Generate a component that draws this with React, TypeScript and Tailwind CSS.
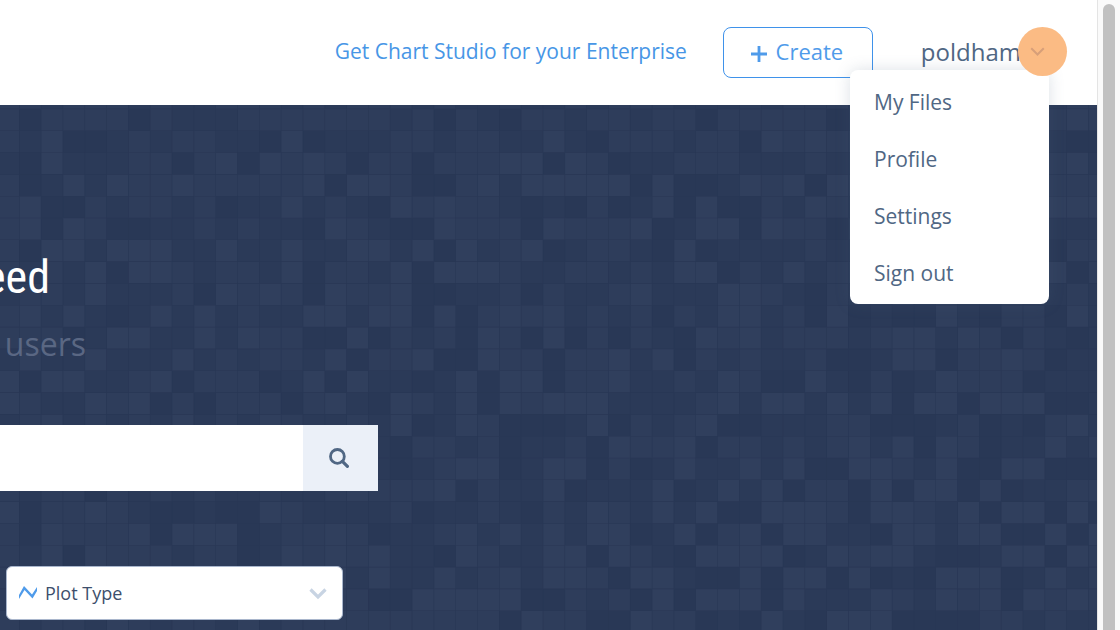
import React, { useState } from "react";

const CELL = 21.82;
const ORIGIN_X = 19.6 - CELL;
const ORIGIN_Y = 4.2 - CELL;

// One digit per tile, 0 = darkest, 3 = lightest.
// Each row is given in three runs of seventeen tiles.
const TILES = [
  ["22122212112221212", "22121121121222111", "21222121111222122"],
  ["20222202111222222", "21202102212212202", "22220111111111232"],
  ["21300121221103011", "12212211310222122", "03232211111111100"],
  ["10311122023032320", "22022233032011222", "11121121111121231"],
  ["20131322322222303", "32002313333303001", "32303212121112222"],
  ["23002122120113121", "03232210102013030", "02132112112111333"],
  ["23032001121211032", "10032220322230133", "03220212112121111"],
  ["20331333113113113", "31303123012210301", "11121121121121022"],
  ["21213033212213022", "13033321122121330", "21312212112112302"],
  ["12213111203232032", "23001120211231113", "32102112121121121"],
  ["23131013131211331", "33030232312120213", "31203010031022031"],
  ["22201331131322003", "02120320302021032", "31222123313202101"],
  ["13113111312122130", "22300322022313021", "21120013302232011"],
  ["30331123022201303", "11013033022311213", "20031020132220111"],
  ["32113230202220231", "03213032333111123", "13313130330333001"],
  ["12312121312132112", "13013200013021230", "01112200012010231"],
  ["21321203122130212", "10221201120322302", "21212313032011312"],
  ["12302132120312132", "10123301330201311", "31300332130033000"],
  ["21220212121121123", "22230211301113013", "13022030330301122"],
  ["30223210010032111", "12011210213213130", "03332033213033030"],
  ["20322230333012232", "01123131313301302", "30331103313300303"],
  ["21303222122013232", "31103211330321033", "33013233100133032"],
  ["21213213213122131", "31131231332033100", "30330301033301312"],
  ["22131221312123122", "00333330021203033", "30311132132303232"],
  ["21221321221312222", "22222203220032201", "03103330000221211"],
].map((runs) => runs.join(""));

const FILLS = ["#293856", "#2b3a58", "#2e3d5b", "#303f5d"];

function tilePath(level: number): string {
  let d = "";
  TILES.forEach((row, r) => {
    for (let c = 0; c < row.length; c++) {
      if (Number(row[c]) === level) {
        const x = (ORIGIN_X + c * CELL).toFixed(1);
        const y = (ORIGIN_Y + r * CELL).toFixed(1);
        d += `M${x} ${y}h21.2v21.2h-21.2z`;
      }
    }
  });
  return d;
}

function Mosaic() {
  return (
    <svg className="absolute inset-0 h-full w-full" aria-hidden="true" viewBox="0 0 1097 525" preserveAspectRatio="xMinYMin slice">
      {FILLS.map((fill, level) => (
        <path key={fill} d={tilePath(level)} fill={fill} />
      ))}
    </svg>
  );
}

function Chevron({ className, width }: { className: string; width: number }) {
  return (
    <svg className={className} viewBox="0 0 18 12" fill="none" stroke="currentColor" strokeWidth={width} aria-hidden="true">
      <path d="M1.500 1.500l7.500 7.500 7.500-7.500" />
    </svg>
  );
}

const MENU = ["My Files", "Profile", "Settings", "Sign out"];

function AccountMenu() {
  const [open, setOpen] = useState(true);
  return (
    <div className="ml-12 pb-0.5">
      <button
        type="button"
        aria-expanded={open}
        onClick={() => setOpen(!open)}
        className="relative flex cursor-pointer items-center gap-[9px] text-2xl leading-8 text-[#506784]"
      >
        poldham
        <span className="absolute -right-[22px] -top-[9px] z-20 size-[49px] rounded-full bg-[#fbbb84]" />
        <Chevron className="relative z-30 h-[10px] w-[15px] text-[#d79f79]" width={2.4} />
      </button>
      {open && (
        <ul className="absolute right-12 top-[70px] z-10 w-[199px] rounded-lg bg-white pb-[2px] pt-1 shadow-[0_0_16px_rgba(80,103,132,0.2)]">
          {MENU.map((item) => (
            <li key={item}>
              <a href="#" className="block px-6 text-[21px] leading-[57px] text-[#506784]">
                {item}
              </a>
            </li>
          ))}
        </ul>
      )}
    </div>
  );
}

function Header() {
  return (
    <header className="relative z-10 flex h-[105px] items-center justify-end bg-white pr-[52px]">
      <a href="#" className="mr-9 pb-1 text-[21px] leading-8 text-[#4796e6]">
        Get Chart Studio for your Enterprise
      </a>
      <button
        type="button"
        className="flex h-[51px] w-[150px] items-center justify-center gap-[9px] rounded-lg border border-[#3f92ea] pb-0.5 pr-0.5 text-[22px] text-[#4f9bea]"
      >
        <svg className="mt-1 size-4" viewBox="0 0 16 16" stroke="currentColor" strokeWidth="2.8" aria-hidden="true">
          <path d="M8 0v16M0 8h16" />
        </svg>
        Create
      </button>
      <AccountMenu />
    </header>
  );
}

function Hero() {
  return (
    <main className="relative flex-1 overflow-hidden bg-[#283755]">
      <Mosaic />
      <div className="relative pt-[142px]">
        <h1 className="flex w-[50px] justify-end font-['Roboto_Condensed','Roboto',sans-serif] text-[46px] leading-[60px] text-white">
          eed
        </h1>
        <p className="mt-4 w-[86px] text-right text-[32px] leading-[42px] text-[#5a6783]">users</p>
        <form className="mt-[60px] flex h-[66px] w-[378px]" onSubmit={(e) => e.preventDefault()}>
          <input type="text" aria-label="Search charts" className="min-w-0 flex-1 bg-white px-4 text-lg outline-none" />
          <button type="submit" aria-label="Search" className="flex w-[75px] items-center justify-center bg-[#ebf0f8] pr-1 text-[#506784]">
            <svg className="size-5" viewBox="0 0 20 20" fill="none" stroke="currentColor" aria-hidden="true">
              <circle cx="8.4" cy="8.4" r="6.9" strokeWidth="2.8" />
              <path d="M13.4 13.4l5 5" strokeWidth="3.2" strokeLinecap="round" />
            </svg>
          </button>
        </form>
        <div className="relative ml-[6px] mt-[75px] h-[54px] w-[337px]">
          <select
            aria-label="Plot Type"
            className="size-full appearance-none rounded-md border border-[#a9b6cc] bg-white pl-[38px] text-lg text-[#3d4f6c] outline-none"
          >
            <option>Plot Type</option>
          </select>
          <svg className="pointer-events-none absolute left-[13px] top-[20px] h-[13px] w-[18px] text-[#4f9bea]" viewBox="0 0 18 13" aria-hidden="true">
            <path d="M0 9L5 0l8 8.500L18 1v4l-4.500 7.500L5.500 4 0 13z" fill="currentColor" />
          </svg>
          <Chevron className="pointer-events-none absolute right-4 top-[22px] h-[12px] w-[18px] text-[#c8d4e3]" width={3.2} />
        </div>
      </div>
    </main>
  );
}

export default function App() {
  return (
    <div className="flex h-screen overflow-hidden bg-white font-['Open_Sans',sans-serif]">
      <div className="flex min-w-0 flex-1 flex-col">
        <Header />
        <Hero />
      </div>
      <div className="flex w-[23px] justify-center border-l border-[#e4e4e4] bg-[#fafafa] pt-1" aria-hidden="true">
        <div className="w-3 rounded-t-full bg-[#c1c1c1]" />
      </div>
    </div>
  );
}
